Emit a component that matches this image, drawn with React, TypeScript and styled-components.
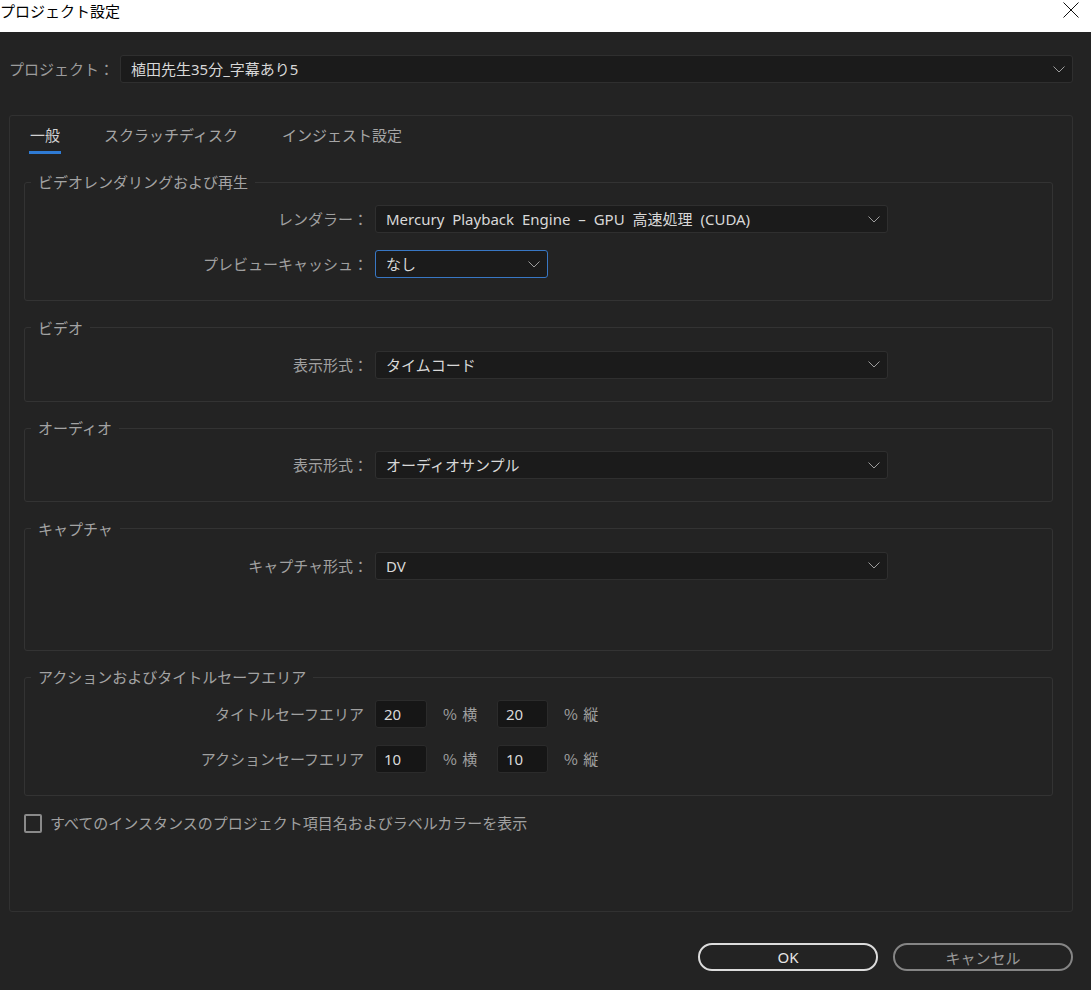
import React from "react";
import styled, { createGlobalStyle } from "styled-components";

const GlobalStyle = createGlobalStyle`
  html, body {
    margin: 0;
    padding: 0;
    background: #232323;
  }
  body {
    font-family: "Noto Sans", "Noto Sans CJK JP", sans-serif;
    font-size: 15px;
    -webkit-font-smoothing: antialiased;
  }
  * {
    box-sizing: border-box;
  }
`;

const Window = styled.div`
  width: 1091px;
  height: 990px;
  display: flex;
  flex-direction: column;
  overflow: hidden;
`;

const TitleBar = styled.div`
  height: 32px;
  flex: none;
  background: #ffffff;
  display: flex;
  justify-content: space-between;
  align-items: flex-start;
  padding: 1px 12px 0 0;
`;

const TitleText = styled.span`
  font-family: "Noto Sans CJK JP", sans-serif;
  font-size: 15px;
  line-height: 20px;
  color: #000;
`;

const CloseButton = styled.button`
  all: unset;
  width: 16px;
  height: 16px;
  margin-top: 1px;
  display: flex;
`;

const Body = styled.div`
  flex: 1;
  background: #232323;
  padding: 23px 18px 0 9px;
  display: flex;
  flex-direction: column;
`;

const ProjectRow = styled.div`
  display: flex;
  align-items: center;
  height: 28px;
`;

const ProjectLabel = styled.span`
  width: 111px;
  flex: none;
  color: #9c9c9c;
  font-family: "Noto Sans CJK JP", sans-serif;
  line-height: 20px;
`;

const Panel = styled.div`
  margin-top: 32px;
  height: 797px;
  border: 1px solid #313131;
  border-radius: 3px;
  padding: 9px 19px 0 14px;
  display: flex;
  flex-direction: column;
`;

const TabRow = styled.div`
  display: flex;
  gap: 42px;
  padding-left: 5px;
`;

const Tab = styled.div<{ $active?: boolean }>`
  padding: 0 1px 6px;
  line-height: 20px;
  font-family: "Noto Sans CJK JP", sans-serif;
  color: ${(p) => (p.$active ? "#d2d2d2" : "#a6a6a6")};
  border-bottom: 3px solid ${(p) => (p.$active ? "#2f7bd4" : "transparent")};
`;

const Group = styled.fieldset<{ $minContent?: number; $first?: boolean }>`
  margin: ${(p) => (p.$first ? "18px" : "16.5px")} 0 0;
  padding: 13px 0 22px;
  border: 1px solid #333333;
  border-radius: 3px;
  display: flex;
  flex-direction: column;
  gap: 17px;
  min-height: ${(p) => (p.$minContent ? `${p.$minContent}px` : "auto")};
`;

const Legend = styled.legend`
  margin-left: 6px;
  padding: 0 7px;
  line-height: 20px;
  font-family: "Noto Sans CJK JP", sans-serif;
  color: #a3a3a3;
`;

const FieldRow = styled.div`
  display: grid;
  grid-template-columns: 343px auto;
  column-gap: 7px;
  align-items: center;
`;

const FieldLabel = styled.span<{ $colon?: boolean }>`
  text-align: right;
  color: #a0a0a0;
  font-family: "Noto Sans CJK JP", sans-serif;
  line-height: 20px;
  padding-right: ${(p) => (p.$colon ? "0" : "4px")};
`;

const SelectBox = styled.div<{ $width?: number; $focused?: boolean; $grow?: boolean }>`
  height: 28px;
  width: ${(p) => (p.$width ? `${p.$width}px` : "auto")};
  flex: ${(p) => (p.$grow ? "1" : "none")};
  background: #1b1b1b;
  border: 1px solid ${(p) => (p.$focused ? "#3877c4" : "#2f2f2f")};
  border-radius: 3px;
  display: flex;
  align-items: center;
  justify-content: space-between;
  padding: 0 7px 0 10px;
`;

const SelectValue = styled.span`
  color: #d8d8d8;
  line-height: 20px;
  word-spacing: 4px;
  white-space: nowrap;
`;

const NumberRow = styled.div`
  display: flex;
  align-items: center;
`;

const NumberInput = styled.div<{ $width: number }>`
  width: ${(p) => p.$width}px;
  height: 28px;
  background: #161616;
  border: 1px solid #2b2b2b;
  border-radius: 3px;
  color: #dadada;
  line-height: 26px;
  padding-left: 8px;
`;

const Unit = styled.span`
  width: 70px;
  padding-left: 16px;
  color: #a0a0a0;
  font-family: "Noto Sans CJK JP", sans-serif;
  line-height: 20px;
  word-spacing: 2px;
`;

const CheckRow = styled.label`
  display: flex;
  align-items: center;
  gap: 8px;
  margin-top: 17px;
`;

const CheckBox = styled.span`
  width: 18px;
  height: 19px;
  border: 2px solid #8a8a8a;
  border-radius: 2px;
  flex: none;
`;

const CheckText = styled.span`
  color: #a0a0a0;
  font-family: "Noto Sans CJK JP", sans-serif;
  line-height: 20px;
`;

const Footer = styled.div`
  display: flex;
  justify-content: flex-end;
  gap: 15px;
  margin-top: 31px;
`;

const DialogButton = styled.button<{ $primary?: boolean }>`
  all: unset;
  width: 180px;
  height: 28px;
  border-radius: 14px;
  border: 2px solid ${(p) => (p.$primary ? "#dcdcdc" : "#858585")};
  color: ${(p) => (p.$primary ? "#e6e6e6" : "#9a9a9a")};
  font-family: "Noto Sans", "Noto Sans CJK JP", sans-serif;
  font-size: 15px;
  display: flex;
  align-items: center;
  justify-content: center;
  box-sizing: border-box;
`;

const Chevron = () => (
  <svg width="12" height="7" viewBox="0 0 12 7" fill="none">
    <path d="M0.5 0.5 L6 6 L11.5 0.5" stroke="#9d9d9d" strokeWidth="1" />
  </svg>
);

const CloseIcon = () => (
  <svg width="16" height="16" viewBox="0 0 16 16" fill="none">
    <path d="M0.5 0.5 L15.5 15.5 M15.5 0.5 L0.5 15.5" stroke="#111" strokeWidth="1" />
  </svg>
);

type SelectProps = {
  value: string;
  width?: number;
  focused?: boolean;
  grow?: boolean;
};

const Select = ({ value, width, focused, grow }: SelectProps) => (
  <SelectBox $width={width} $focused={focused} $grow={grow}>
    <SelectValue>{value}</SelectValue>
    <Chevron />
  </SelectBox>
);

const SafeRow = ({ label, h, v }: { label: string; h: string; v: string }) => (
  <FieldRow>
    <FieldLabel>{label}</FieldLabel>
    <NumberRow>
      <NumberInput $width={52}>{h}</NumberInput>
      <Unit>% 横</Unit>
      <NumberInput $width={51}>{v}</NumberInput>
      <Unit>% 縦</Unit>
    </NumberRow>
  </FieldRow>
);

export default function App() {
  return (
    <>
      <GlobalStyle />
      <Window>
        <TitleBar>
          <TitleText>プロジェクト設定</TitleText>
          <CloseButton aria-label="閉じる">
            <CloseIcon />
          </CloseButton>
        </TitleBar>
        <Body>
          <ProjectRow>
            <ProjectLabel>プロジェクト：</ProjectLabel>
            <Select value="植田先生35分_字幕あり5" grow />
          </ProjectRow>

          <Panel>
            <TabRow>
              <Tab $active>一般</Tab>
              <Tab>スクラッチディスク</Tab>
              <Tab>インジェスト設定</Tab>
            </TabRow>

            <Group $first>
              <Legend>ビデオレンダリングおよび再生</Legend>
              <FieldRow>
                <FieldLabel $colon>レンダラー：</FieldLabel>
                <Select value="Mercury Playback Engine – GPU 高速処理 (CUDA)" width={513} />
              </FieldRow>
              <FieldRow>
                <FieldLabel $colon>プレビューキャッシュ：</FieldLabel>
                <Select value="なし" width={173} focused />
              </FieldRow>
            </Group>

            <Group>
              <Legend>ビデオ</Legend>
              <FieldRow>
                <FieldLabel $colon>表示形式：</FieldLabel>
                <Select value="タイムコード" width={513} />
              </FieldRow>
            </Group>

            <Group>
              <Legend>オーディオ</Legend>
              <FieldRow>
                <FieldLabel $colon>表示形式：</FieldLabel>
                <Select value="オーディオサンプル" width={513} />
              </FieldRow>
            </Group>

            <Group $minContent={132}>
              <Legend>キャプチャ</Legend>
              <FieldRow>
                <FieldLabel $colon>キャプチャ形式：</FieldLabel>
                <Select value="DV" width={513} />
              </FieldRow>
            </Group>

            <Group>
              <Legend>アクションおよびタイトルセーフエリア</Legend>
              <SafeRow label="タイトルセーフエリア" h="20" v="20" />
              <SafeRow label="アクションセーフエリア" h="10" v="10" />
            </Group>

            <CheckRow>
              <CheckBox />
              <CheckText>すべてのインスタンスのプロジェクト項目名およびラベルカラーを表示</CheckText>
            </CheckRow>
          </Panel>

          <Footer>
            <DialogButton $primary>OK</DialogButton>
            <DialogButton>キャンセル</DialogButton>
          </Footer>
        </Body>
      </Window>
    </>
  );
}
